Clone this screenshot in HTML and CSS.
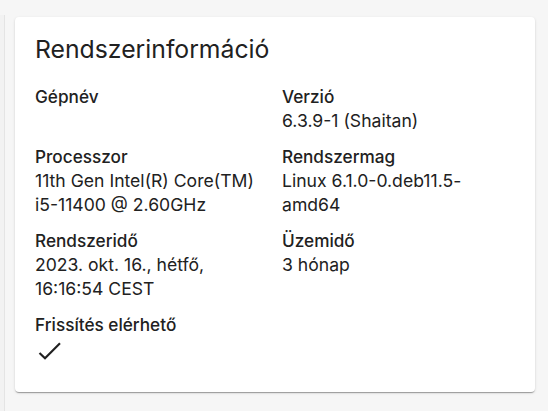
FILE: index.html
```html
<!DOCTYPE html>
<html lang="hu">
<head>
<meta charset="utf-8">
<title>Rendszerinformáció</title>
<link rel="stylesheet" href="styles.css">
</head>
<body>
<div class="page">
  <div class="prev-card"></div>
  <section class="card">
    <h1 class="card-title">Rendszerinformáció</h1>
    <dl class="info-grid">
      <div class="info-item">
        <dt class="info-label">Gépnév</dt>
        <dd class="info-value"></dd>
      </div>
      <div class="info-item">
        <dt class="info-label">Verzió</dt>
        <dd class="info-value">6.3.9-1 (Shaitan)</dd>
      </div>
      <div class="info-item">
        <dt class="info-label">Processzor</dt>
        <dd class="info-value">11th Gen Intel(R) Core(TM) i5-11400 @ 2.60GHz</dd>
      </div>
      <div class="info-item">
        <dt class="info-label">Rendszermag</dt>
        <dd class="info-value">Linux 6.1.0-0.deb11.5-amd64</dd>
      </div>
      <div class="info-item">
        <dt class="info-label">Rendszeridő</dt>
        <dd class="info-value">2023. okt. 16., hétfő, 16:16:54 CEST</dd>
      </div>
      <div class="info-item">
        <dt class="info-label">Üzemidő</dt>
        <dd class="info-value">3 hónap</dd>
      </div>
      <div class="info-item">
        <dt class="info-label">Frissítés elérhető</dt>
        <dd class="info-value">
          <svg class="check-icon" width="28" height="24" viewBox="0 0 28 24" aria-hidden="true">
            <polyline points="4.5,16 10,21.2 25,6.2" fill="none" stroke="#212121" stroke-width="2.2" stroke-linecap="butt" stroke-linejoin="miter"/>
          </svg>
        </dd>
      </div>
    </dl>
  </section>
</div>
</body>
</html>
```

FILE: styles.css
```css
html, body {
  margin: 0;
  padding: 0;
  background: #f6f6f6;
  font-family: Inter, "Noto Sans", "DejaVu Sans", sans-serif;
  color: #212121;
}

.page {
  display: flex;
  gap: 10px;
  padding: 17px 13px 0 0;
  min-height: 411px;
  box-sizing: border-box;
}

.prev-card {
  flex: 0 0 4px;
  background: #f2f2f2;
  border-right: 1px solid #e4e4e4;
  margin-top: -2px;
}

.card {
  flex: 1 1 auto;
  background: #ffffff;
  border-radius: 4px;
  box-shadow: 0 2px 1px -1px rgba(0,0,0,0.2), 0 1px 1px 0 rgba(0,0,0,0.14), 0 1px 3px 0 rgba(0,0,0,0.12);
  padding: 16px 20px 31px 20px;
  align-self: flex-start;
}

.card-title {
  margin: 0 0 20px 0;
  font-size: 24.75px;
  line-height: 32px;
  font-weight: 400;
  color: #212121;
}

.info-grid {
  margin: 0;
  display: grid;
  grid-template-columns: 1fr 1fr;
  column-gap: 14px;
  row-gap: 12px;
}

.info-item {
  min-width: 0;
}

.info-label {
  font-size: 17.2px;
  line-height: 24px;
  font-weight: 500;
  margin: 0;
}

.info-value {
  margin: 0;
  font-size: 17.6px;
  line-height: 24px;
  font-weight: 400;
  min-height: 24px;
}

.check-icon {
  display: block;
}
```
